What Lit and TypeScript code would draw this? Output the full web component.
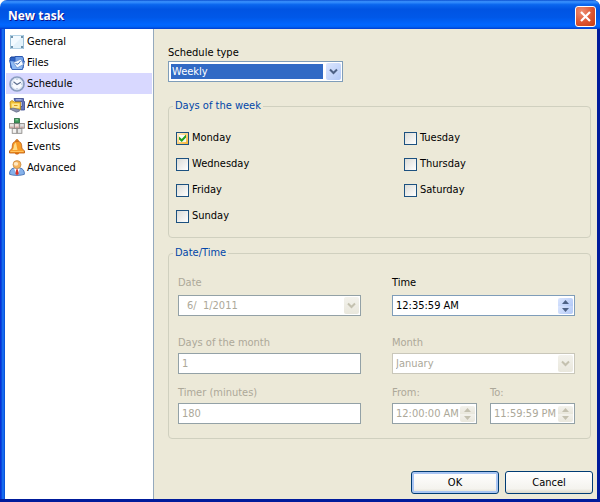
import { LitElement, html, css, svg, nothing } from "lit";
import { customElement, property, state } from "lit/decorators.js";
import { classMap } from "lit/directives/class-map.js";

const icons = {
  General: svg`
    <rect x="1.500" y="1.500" width="13" height="13" fill="#e3f2fb" stroke="#b4d3e6"/>
    <path d="M2 2h12L2 14z" fill="#f3faff"/>
    <path d="M2 2h2v2H2zM12 2h2v2h-2zM2 12h2v2H2zM12 12h2v2h-2z" fill="#6f93ad"/>
    <path d="M1.500 1v14M14.500 1v14" stroke="#9cc0d8"/>`,
  Files: svg`
    <path d="M1 3.500 2 2h4l1.500 1.500H14V13H2z" fill="#2c62c4" stroke="#173f93"/>
    <path d="M6 1.500h7.500l1 2V8H6z" fill="#6fa0ea" stroke="#2a57b0"/>
    <path d="m.6 5.500 4.400.500 1 1.500L15.400 6l-1.900 8.500H3z" fill="#8dbaf4" stroke="#2757b3" stroke-width=".9"/>
    <path d="m4.500 7.500 7.500-3.500 2.500 5.500-6.500 3.500z" fill="#f4f9ff" stroke="#6b90cc" stroke-width=".8"/>
    <path d="m6.500 8.500 2.500.700 2.500-3" fill="none" stroke="#3c6cb9"/>`,
  Schedule: svg`
    <circle cx="8" cy="8" r="7" fill="#f8fbff" stroke="#8a9dbf" stroke-width="1.700"/>
    <circle cx="8" cy="8" r="5.600" fill="none" stroke="#c8d6ea" stroke-width=".8"/>
    <path d="M8 3v1M8 12v1M3 8h1M12 8h1" stroke="#9fb0cd"/>
    <path d="m4.500 5.800 3.500 2.700 3.800-2.300" fill="none" stroke="#5e6f90" stroke-width="1.100"/>`,
  Archive: svg`
    <path d="M5 1.500h9.500v3h1v8.500H11.500V9.500h1.500V4.500H6z" fill="#6677bd" stroke="#36458b" stroke-width=".8"/>
    <path d="M7 2.800h5.500" stroke="#b5c0ea"/>
    <path d="M1 5 3 3.500l2.500 1.500h6v7.500L8 14.500 1.500 12z" fill="#f5c433" stroke="#b8851a" stroke-width=".8"/>
    <path d="M2.500 6.500h8v4.500H3z" fill="#ffe790"/>
    <path d="m.8 12 3-1 6.500 1.500v1.700l-3 1z" fill="#8c93ad" stroke="#565f85" stroke-width=".6"/>
    <path d="M5 8.500h3.500" stroke="#d99b1a"/>`,
  Exclusions: svg`
    <g stroke="#85827f" stroke-width=".8">
      <rect x=".6" y="5.500" width="4.600" height="4.700" fill="#e6e4e1"/>
      <rect x="5.600" y="5.500" width="4.600" height="4.700" fill="#f0dcd9"/>
      <rect x="10.700" y="5.500" width="4.600" height="4.700" fill="#dcdedf"/>
      <rect x="3.200" y="10.600" width="4.600" height="4.700" fill="#f3f1ef"/>
      <rect x="8.300" y="10.600" width="4.600" height="4.700" fill="#e5e6e6"/>
    </g>
    <rect x="5.500" y=".6" width="5" height="4.200" fill="#3f9a5b" stroke="#21683a" stroke-width=".8"/>
    <path d="M6.500 1.800h2.500" stroke="#a2dcb0"/>
    <path d="M1 9.200h3.500M6.500 9.200h3M11.500 9.200h3" stroke="#c58d87" stroke-width=".9"/>`,
  Events: svg`
    <circle cx="8" cy="2" r="1.400" fill="#f39a2d" stroke="#b75a0b" stroke-width=".7"/>
    <path d="M8 2.200c3.800 0 4.600 2.500 4.700 5 0 2.500.8 3.300 2.800 4.600v2.200H.5v-2.200c2-1.300 2.800-2.100 2.800-4.600.1-2.500.900-5 4.700-5z" fill="#f79a25" stroke="#b8560c" stroke-width=".8"/>
    <path d="M7 3.800c-2 .700-2 3-2.200 4.500-.1 1.200-.8 2-1.500 2.700h5.200z" fill="#ffdb85"/>
    <path d="M1.500 12.400h13" stroke="#ffc866"/>
    <path d="M6 14h4c0 2-4 2-4 0z" fill="#d66b11"/>`,
  Advanced: svg`
    <path d="M.6 14.300c-.3-3.300 1.400-5.800 4.400-6.300h6c3 .5 4.700 3 4.400 6.300-3 1.500-11.800 1.500-14.800 0z" fill="#86b2ea" stroke="#3a67ad" stroke-width=".8"/>
    <path d="M5 8.500h6L8 15z" fill="#fff"/>
    <path d="M7.300 9.300h1.500l.9 4.400L8 15.300l-1.600-1.600z" fill="#d8342a"/>
    <circle cx="8" cy="4.600" r="4" fill="#f6b45c" stroke="#c08440" stroke-width=".7"/>
    <ellipse cx="7" cy="3.800" rx="2.200" ry="1.900" fill="#ffe9c4"/>`,
};

type Section = keyof typeof icons;
const sections = Object.keys(icons) as Section[];

const base = css`
  * { box-sizing: border-box; }
  button, input, select { font: inherit; color: inherit; margin: 0; }
  svg { display: block; }
`;

const box = css`
  .box {
    display: flex;
    align-items: center;
    height: 21px;
    padding: 2px 1px 2px 2px;
    background: #fff;
    border: 1px solid #7f9db9;
  }
  .box.off { color: #aca899; border-color: #93a1a6; }
  .box.off.pale { border-color: #c9c7ba; }
  .value {
    flex: 1;
    min-width: 0;
    height: 15px;
    padding: 0 1px;
    border: 0;
    border-radius: 0;
    outline: 0;
    background: transparent;
    appearance: none;
    line-height: 15px;
    opacity: 1;
  }
  .value.active { background: #316ac5; color: #fff; margin-right: 3px; }
  .value.inset { padding: 0 6px; }
  .drop, .step {
    flex: none;
    width: 15px;
    height: 17px;
    padding: 0;
    border: 0;
    border-radius: 2px;
    background: linear-gradient(135deg, #dbe6fe, #b3c9f7);
    color: #4d6185;
  }
  .off .drop, .off .step {
    background: linear-gradient(#f3f2ec, #e9e7dc);
    color: #c4c1b0;
  }
  .drop { display: grid; place-items: center; pointer-events: none; }
  .steps { flex: none; display: flex; flex-direction: column; }
  .step { height: 8px; display: grid; place-items: center; }
  .step:first-child { border-radius: 2px 2px 0 0; }
  .step:last-child { border-radius: 0 0 2px 2px; }
`;

const chevron = html`<span class="drop"><svg width="9" height="7" viewBox="0 0 9 7" aria-hidden="true">
  <path d="m1 1.500 3.500 3.500L8 1.500" fill="none" stroke="currentColor" stroke-width="2"/></svg></span>`;

/** Labelled one-line control: plain text, drop-down or spinner. */
@customElement("task-field")
export class TaskField extends LitElement {
  @property() label = "";
  @property() value = "";
  @property() kind: "text" | "select" | "date" | "spin" = "text";
  @property({ type: Boolean }) disabled = false;
  @property({ type: Boolean }) highlighted = false;
  @property({ attribute: false }) options: string[] = [];

  static styles = [base, box, css`
    :host { display: flex; flex-direction: column; gap: 2px; min-width: 0; }
    :host(.lead) { gap: 4px; }
    :host(.type) { gap: 0; }
    label { line-height: 16px; white-space: pre; }
    label.off { color: #aca899; }
  `];

  render() {
    const off = this.disabled;
    const classes = { box: true, off, pale: off && this.kind === "select" };
    return html`
      <label class=${off ? "off" : ""} for="control">${this.label}</label>
      <div class=${classMap(classes)}>
        ${this.kind === "select"
          ? html`<select id="control" class=${classMap({ value: true, active: this.highlighted })} ?disabled=${off}>
              ${this.options.map((o) => html`<option ?selected=${o === this.value}>${o}</option>`)}
            </select>`
          : html`<input id="control" type="text" class=${classMap({ value: true, inset: this.kind === "date" })}
              .value=${this.value} ?disabled=${off}>`}
        ${this.kind === "select" || this.kind === "date" ? chevron : nothing}
        ${this.kind === "spin" ? this.steps() : nothing}
      </div>`;
  }

  private steps() {
    return html`<span class="steps">
      <button class="step" type="button" aria-label="Increase" ?disabled=${this.disabled}>
        <svg width="7" height="4" viewBox="0 0 7 4"><path d="M0 4 3.500 0 7 4z" fill="currentColor"/></svg>
      </button>
      <button class="step" type="button" aria-label="Decrease" ?disabled=${this.disabled}>
        <svg width="7" height="4" viewBox="0 0 7 4"><path d="M0 0h7L3.500 4z" fill="currentColor"/></svg>
      </button>
    </span>`;
  }
}

@customElement("app-root")
export class AppRoot extends LitElement {
  @state() private section: Section = "Schedule";
  @state() private days = new Set(["Monday"]);

  static styles = [base, css`
    :host {
      display: flex;
      flex-direction: column;
      min-height: 100vh;
      font: 11px/16px "DejaVu Sans Condensed", Tahoma, "DejaVu Sans", sans-serif;
      color: #000;
      background: #ece9d8;
      border: solid #001b9b;
      border-width: 0 3px 3px 0;
      box-sizing: border-box;
      border-radius: 7px 7px 0 0;
    }
    header {
      display: flex;
      align-items: center;
      justify-content: space-between;
      height: 29px;
      margin-right: -3px;
      padding: 3px 4px 0 8px;
      border-radius: 7px 7px 0 0;
      background: linear-gradient(#0a4fd0 0, #3b93ff 6%, #0a66ee 16%, #0054e3 32%, #0058e8 60%, #0066ff 85%, #0062f5 92%, #003dd0 100%);
    }
    h1 {
      margin: 0;
      font: bold 12px/20px "Open Sans", "Noto Sans", sans-serif;
      color: #fff;
      text-shadow: 1px 1px #0f1089;
    }
    .close {
      display: grid;
      place-items: center;
      width: 21px;
      height: 21px;
      padding: 0;
      border: 1px solid #fff;
      border-radius: 3px;
      background: radial-gradient(circle at 30% 25%, #ee8f72, #dc5532 55%, #c33c14);
    }
    .body {
      flex: 1;
      display: flex;
      padding-left: 5px;
      background: linear-gradient(90deg, #0831d9 0 1px, #0a48dc 1px 2px, #166aee 2px 4px, #0855dd 4px 5px, transparent 5px);
    }
    nav {
      flex: none;
      width: 149px;
      padding: 2px 1px;
      background: #fff;
      border-right: 1px solid #94a9bd;
    }
    nav a {
      display: flex;
      align-items: center;
      gap: 2px;
      height: 21px;
      padding: 1px 0 0 3px;
      color: inherit;
      text-decoration: none;
    }
    nav a.current { background: #d8d8ff; }
    form {
      flex: 1;
      min-width: 0;
      display: flex;
      flex-direction: column;
      padding: 16px 4px 5px 14px;
    }
    .type { width: 175px; margin-bottom: 16px; }
    fieldset {
      min-width: 0;
      margin: 0 2px 7px 0;
      padding: 0 4px;
      border: 1px solid #d0d0bf;
      border-radius: 4px;
    }
    legend { padding: 0 2px; color: #0046a8; }
    .days {
      display: grid;
      grid-template-columns: 14fr 11fr;
      padding: 11px 3px 8px;
    }
    .days label { display: flex; align-items: center; gap: 3px; height: 26px; }
    .days input {
      appearance: none;
      display: grid;
      width: 13px;
      height: 13px;
      border: 1px solid #1c5180;
      background: linear-gradient(135deg, #dcdcd7, #fff);
    }
    .days input:checked {
      background:
        linear-gradient(135deg, #fff, #f5f5e8) center / 7px 7px no-repeat,
        linear-gradient(135deg, #fff0cf, #f8b330);
    }
    .days input:checked::before {
      content: "";
      background: #21a121;
      clip-path: polygon(18% 36%, 43% 58%, 82% 18%, 82% 45%, 43% 86%, 18% 63%);
    }
    .fields {
      display: grid;
      grid-template-columns: 1fr 1fr;
      gap: 11px 31px;
      padding: 14px 11px 14px 5px;
    }
    .lead { margin-bottom: 8px; }
    .range { display: grid; grid-template-columns: 1fr 1fr; gap: 13px; }
    footer { display: flex; justify-content: flex-end; gap: 6px; margin-top: auto; }
    footer button {
      width: 88px;
      height: 23px;
      padding: 0;
      border: 1px solid #003c74;
      border-radius: 3px;
      background: linear-gradient(#fff, #f4f3ee 80%, #dcd8cb);
    }
    footer .default { box-shadow: inset 0 0 0 2px #a9c5f3; }
  `];

  private toggle(day: string) {
    const next = new Set(this.days);
    next.has(day) ? next.delete(day) : next.add(day);
    this.days = next;
  }

  render() {
    const week = ["Monday", "Tuesday", "Wednesday", "Thursday", "Friday", "Saturday", "Sunday"];
    return html`
      <header>
        <h1>New task</h1>
        <button class="close" type="button" aria-label="Close">
          <svg width="13" height="13" viewBox="0 0 13 13"><path d="m2 2 9 9M11 2l-9 9" stroke="#fff" stroke-width="2.200"/></svg>
        </button>
      </header>
      <div class="body">
        <nav>
          ${sections.map((name) => html`
            <a href="#${name}" class=${classMap({ current: name === this.section })}
              @click=${() => (this.section = name)}>
              <svg width="16" height="16" viewBox="0 0 16 16" aria-hidden="true">${icons[name]}</svg>${name}
            </a>`)}
        </nav>
        <form @submit=${(e: Event) => e.preventDefault()}>
          <task-field class="type" label="Schedule type" kind="select" value="Weekly" highlighted
            .options=${["Once", "Daily", "Weekly", "Monthly"]}></task-field>
          <fieldset>
            <legend>Days of the week</legend>
            <div class="days">
              ${week.map((day) => html`
                <label><input type="checkbox" .checked=${this.days.has(day)} @change=${() => this.toggle(day)}>${day}</label>`)}
            </div>
          </fieldset>
          <fieldset>
            <legend>Date/Time</legend>
            <div class="fields">
              <task-field class="lead" label="Date" kind="date" value="6/  1/2011" disabled></task-field>
              <task-field class="lead" label="Time" kind="spin" value="12:35:59 AM"></task-field>
              <task-field label="Days of the month" value="1" disabled></task-field>
              <task-field label="Month" kind="select" value="January" .options=${["January"]} disabled></task-field>
              <task-field label="Timer (minutes)" value="180" disabled></task-field>
              <div class="range">
                <task-field label="From:" kind="spin" value="12:00:00 AM" disabled></task-field>
                <task-field label="To:" kind="spin" value="11:59:59 PM" disabled></task-field>
              </div>
            </div>
          </fieldset>
          <footer>
            <button class="default" type="submit">OK</button>
            <button type="button">Cancel</button>
          </footer>
        </form>
      </div>`;
  }
}
